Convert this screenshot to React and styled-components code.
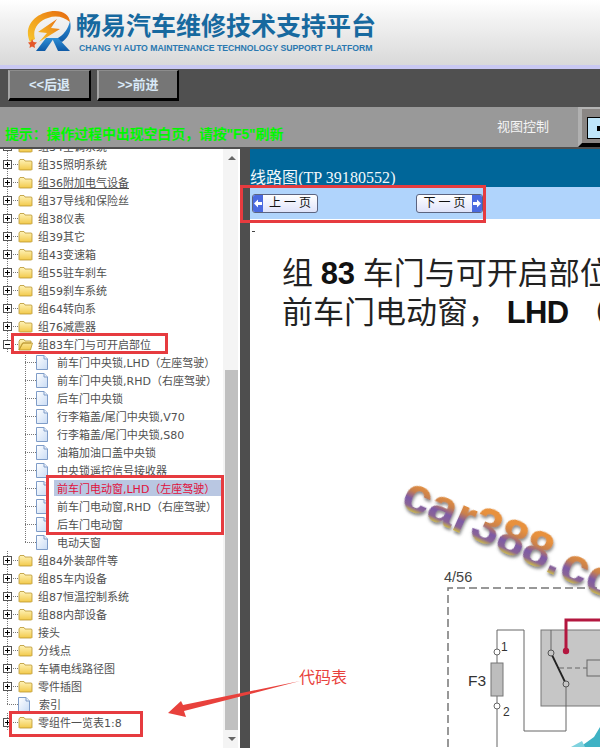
import React from "react";
import styled, { createGlobalStyle, css } from "styled-components";

const GlobalStyle = createGlobalStyle`
  html, body { margin: 0; padding: 0; background: #fff; }
  * { box-sizing: border-box; }
`;

const TREE_FONT = `"DejaVu Sans", "Noto Sans CJK SC", sans-serif`;
const CJK_FONT = `"Liberation Sans", "Noto Sans CJK SC", sans-serif`;

const Page = styled.div`
  position: relative;
  width: 600px;
  height: 748px;
  overflow: hidden;
  display: flex;
  flex-direction: column;
  font-family: ${CJK_FONT};
`;

const Header = styled.header`
  height: 69px;
  flex: none;
  display: flex;
  align-items: flex-start;
  gap: 5px;
  padding: 10px 0 0 25px;
  background: linear-gradient(to bottom, #ffffff 0, #f2f2f2 20px, #d9d9d9 65px);
  border-bottom: 4px solid #c9c8f2;
`;

const Brand = styled.div`
  display: flex;
  flex-direction: column;
`;

const BrandTitle = styled.div`
  font-size: 25px;
  line-height: 30px;
  height: 30px;
  margin-top: 1px;
  font-weight: 700;
  color: #17699f;
  white-space: nowrap;
`;

const BrandSub = styled.div`
  font-size: 8.7px;
  line-height: 12px;
  margin: 1px 0 0 3px;
  font-weight: 700;
  color: #2a78b0;
  white-space: nowrap;
`;

const Toolbar = styled.div`
  height: 38px;
  flex: none;
  display: flex;
  align-items: flex-start;
  gap: 6px;
  padding: 1px 0 0 8px;
  background: #505050;
`;

const ToolButton = styled.div`
  width: ${(p) => p.$w}px;
  height: 31px;
  display: flex;
  align-items: center;
  justify-content: center;
  padding-bottom: 3px;
  background: #767676;
  border-left: 2px solid #a4a4a4;
  border-top: 1px solid #8c8c8c;
  border-right: 2px solid #000;
  border-bottom: 3px solid #000;
  color: #d9e9f7;
  font-size: 13px;
  font-weight: 700;
`;

const NoticeBar = styled.div`
  height: 40px;
  flex: none;
  display: flex;
  background: #999999;
`;

const Notice = styled.div`
  flex: 1;
  padding: 17px 0 0 5px;
  font-size: 14px;
  line-height: 20px;
  font-weight: 700;
  letter-spacing: -0.15px;
  color: #00f800;
  white-space: nowrap;
`;

const ViewLabel = styled.div`
  padding: 11px 29px 0 0;
  font-size: 13px;
  line-height: 17px;
  color: #f4f4f4;
`;

const ViewToggle = styled.div`
  width: 22px;
  padding: 8px 0 0 5px;
  background: #8a8684;
  border-left: 4px solid #b0b0b0;
  border-top: 2px solid #b4b4b4;
  border-bottom: 4px solid #000;
`;

const ViewBox = styled.div`
  height: 22px;
  display: flex;
  align-items: center;
  justify-content: flex-end;
  background: #bfe6fb;
  border: 1px solid #000;
  border-right: 0;
  &::after {
    content: "";
    width: 3px;
    height: 5px;
    background: #000;
  }
`;

const Main = styled.div`
  flex: 1;
  min-height: 0;
  display: flex;
  border-top: 2px solid #4e4e4e;
`;

const Sidebar = styled.aside`
  width: 240px;
  flex: none;
  display: flex;
  background: #fff;
  overflow: hidden;
`;

const Tree = styled.div`
  flex: 1;
  min-width: 0;
  margin-top: -12px;
  font-family: ${TREE_FONT};
  font-size: 11px;
  color: #505050;
`;

const dots = (x, size = "100%") => css`
  repeating-linear-gradient(to bottom, #777 0 1px, transparent 1px 2px) ${x}px 0 / 1px ${size} no-repeat
`;
const hdots = (x, w) => css`
  repeating-linear-gradient(to right, #777 0 1px, transparent 1px 2px) ${x}px 9px / ${w}px 1px no-repeat
`;

const Row = styled.div`
  height: 18px;
  display: flex;
  align-items: center;
  white-space: nowrap;
  padding-left: ${(p) => (p.$kind === "child" || p.$kind === "lastChild" ? 36 : p.$kind === "index" ? 18 : 3)}px;
  ${(p) =>
    p.$kind === "child" &&
    css`
      background: ${dots(25)}, ${hdots(25, 11)};
    `}
  ${(p) =>
    p.$kind === "lastChild" &&
    css`
      background: ${dots(25, "10px")}, ${hdots(25, 11)};
    `}
  ${(p) =>
    (p.$kind === "group" || p.$kind === "index") &&
    css`
      background: ${dots(7, p.$kind === "index" ? "10px" : "100%")}, ${hdots(7, 11)};
    `}
`;

const Expander = styled.span`
  width: 9px;
  height: 9px;
  flex: none;
  margin-right: 6px;
  border: 1px solid #555;
  background:
    linear-gradient(#000, #000) center / 5px 1px no-repeat,
    ${(p) => (p.$open ? "none" : "linear-gradient(#000, #000) center / 1px 5px no-repeat")},
    #fff;
`;

const Label = styled.span`
  margin-left: ${(p) => p.$gap ?? 6}px;
  padding: 0 ${(p) => (p.$selected ? 7 : 3)}px 0 ${(p) => (p.$selected ? 3 : 0)}px;
  height: 16px;
  line-height: 19px;
  color: ${(p) => (p.$selected ? "#e0103c" : "inherit")};
  background: ${(p) => (p.$selected ? "#b9c7e2" : "transparent")};
  text-decoration: ${(p) => (p.$under ? "underline" : "none")};
`;

const Scrollbar = styled.div`
  width: 17px;
  flex: none;
  display: flex;
  flex-direction: column;
  background: #f4f4f4;
  border-right: 2px solid #fff;
  padding-left: 2px;
`;

const ScrollArrow = styled.div`
  height: 18px;
  flex: none;
  display: flex;
  align-items: center;
  justify-content: center;
  &::after {
    content: "";
    border-left: 4px solid transparent;
    border-right: 4px solid transparent;
    ${(p) => (p.$down ? "border-top" : "border-bottom")}: 4px solid #666;
  }
`;

const ScrollTrack = styled.div`
  flex: 1;
  padding-top: 203px;
  display: flex;
`;

const ScrollThumb = styled.div`
  flex: 1;
  background: #c0c0c0;
`;

const Splitter = styled.div`
  width: 10px;
  flex: none;
  background: #4e4e4e;
`;

const Content = styled.main`
  flex: 1;
  min-width: 0;
  display: flex;
  flex-direction: column;
  background: #fff;
  overflow: hidden;
`;

const TitleBar = styled.div`
  height: 38px;
  flex: none;
  padding-top: 20px;
  background: #006699;
  color: #f2f8fb;
  font-family: "Liberation Serif", "Noto Sans CJK SC", serif;
  font-size: 16px;
  line-height: 18px;
  letter-spacing: 0.05px;
  white-space: nowrap;
`;

const NavBar = styled.div`
  height: 32px;
  flex: none;
  display: flex;
  align-items: flex-start;
  gap: 98px;
  padding: 7px 0 0 2px;
  background: #b0d4fc;
`;

const PageButton = styled.div`
  width: ${(p) => p.$w}px;
  height: 19px;
  display: flex;
  flex-direction: ${(p) => (p.$next ? "row-reverse" : "row")};
  align-items: stretch;
  overflow: hidden;
  border: 1px solid #5c6480;
  border-radius: 3px;
  background: linear-gradient(to bottom, #ffffff, #dfe3fa);
  color: #111;
  font-size: 12px;
  line-height: 16px;
  letter-spacing: 3px;
`;

const PageCap = styled.div`
  width: 10px;
  flex: none;
  display: flex;
  align-items: center;
  justify-content: center;
  background: #4a6ae0;
`;

const PageText = styled.div`
  flex: 1;
  text-align: center;
  padding-left: 3px;
`;

const DocBody = styled.div`
  flex: 1;
  min-height: 0;
  display: flex;
  flex-direction: column;
  padding-top: 6px;
`;

const Tick = styled.div`
  width: 3px;
  height: 1px;
  margin: 6px 0 0 2px;
  flex: none;
  background: #444;
`;

const DocHeading = styled.div`
  margin: 22px 0 0 32px;
  flex: none;
  font-size: 31px;
  line-height: 39px;
  word-spacing: -1px;
  color: #222;
  white-space: nowrap;
  b {
    font-family: "Liberation Sans", sans-serif;
    font-weight: 700;
    color: #111;
  }
`;

const Lhd = styled.b`
  letter-spacing: -0.6px;
`;

const DiagramWrap = styled.div`
  margin: 137px 0 0 -1px;
  flex: none;
  width: 351px;
  height: 278px;
  svg {
    display: block;
  }
`;

const RedBox = styled.div`
  position: absolute;
  left: ${(p) => p.$x}px;
  top: ${(p) => p.$y}px;
  width: ${(p) => p.$w}px;
  height: ${(p) => p.$h}px;
  border: 3px solid #e63b3f;
  pointer-events: none;
`;

const ArrowSvg = styled.svg`
  position: absolute;
  left: 160px;
  top: 670px;
`;

const ArrowLabel = styled.div`
  position: absolute;
  left: 299px;
  top: 669px;
  font-size: 16px;
  line-height: 18px;
  color: #e8413c;
`;

const Logo = () => (
  <svg width="46" height="44" viewBox="0 0 46 44">
    <defs>
      <linearGradient id="ring" x1="0" y1="1" x2="1" y2="0">
        <stop offset="0" stopColor="#f7c52c" />
        <stop offset="0.55" stopColor="#f09a1c" />
        <stop offset="1" stopColor="#e5660f" />
      </linearGradient>
      <linearGradient id="blueR" x1="0" y1="0" x2="0" y2="1">
        <stop offset="0" stopColor="#2f8fd6" />
        <stop offset="1" stopColor="#0f5aa6" />
      </linearGradient>
    </defs>
    <path d="M5 32C-3 15 13 1 30 1C39 1 44 5 45 12C39 7 31 5 23 8C13 11 7 20 10 29Z" fill="url(#ring)" />
    <path d="M45 11C47 20 44 27 37 32L31 29C39 25 43 19 45 11Z" fill="url(#blueR)" />
    <path d="M32 9L13 22L22 23L14 32L35 19L26 18Z" fill="url(#ring)" />
    <path d="M11 41L21 28L29 28L20 41Z" fill="url(#blueR)" />
    <path d="M27 28L33 28L45 41L33 41Z" fill="url(#blueR)" />
    <path d="M7 29L8.500 32L12 32.500L9.500 35L10 38L7 36.500L4.500 38L5 35L3 32.500L6 32Z" fill="#e4572a" />
  </svg>
);

const Folder = ({ open }) => (
  <svg width="15" height="13" viewBox="0 0 15 13">
    <defs>
      <linearGradient id="folderFill" x1="0" y1="0" x2="0" y2="1">
        <stop offset="0" stopColor="#fff3b8" />
        <stop offset="1" stopColor="#f2c94a" />
      </linearGradient>
    </defs>
    {open ? (
      <path d="M1 3.500L2 1.500H6L7 3H13V5H5L1 12ZM1 12L4.500 5H14.500L12.500 12Z" fill="url(#folderFill)" stroke="#b9952f" strokeWidth="0.8" />
    ) : (
      <path d="M1 3L2 1.500H6L7 3H13.500L14 4V11.500L13.500 12H1.500L1 11.500Z" fill="url(#folderFill)" stroke="#b9952f" strokeWidth="0.8" />
    )}
  </svg>
);

const Doc = () => (
  <svg width="12" height="15" viewBox="0 0 12 15">
    <defs>
      <linearGradient id="docFill" x1="0" y1="0" x2="1" y2="1">
        <stop offset="0" stopColor="#ffffff" />
        <stop offset="1" stopColor="#c9dcf5" />
      </linearGradient>
    </defs>
    <path d="M0.500 0.500H8L11.500 4V14.500H0.500Z" fill="url(#docFill)" stroke="#7e9cc8" />
    <path d="M8 0.500V4H11.500" fill="#e8f0fb" stroke="#7e9cc8" />
  </svg>
);

const Arrowhead = ({ right }) => (
  <svg width="8" height="9" viewBox="0 0 8 9">
    <path d={right ? "M0 3H4V0.500L8 4.500L4 8.500V6H0Z" : "M8 3H4V0.500L0 4.500L4 8.500V6H8Z"} fill="#fff" />
  </svg>
);

const Diagram = () => (
  <svg width="351" height="278" viewBox="0 0 351 278">
    <defs>
      <linearGradient id="mark" gradientUnits="userSpaceOnUse" x1="0" y1="2" x2="0" y2="42">
        <stop offset="0.15" stopColor="#e8913c" />
        <stop offset="0.38" stopColor="#c9804c" />
        <stop offset="0.58" stopColor="#7d5aa6" />
        <stop offset="0.76" stopColor="#8a6496" />
        <stop offset="0.9" stopColor="#dccd33" />
        <stop offset="1" stopColor="#c4ba40" />
      </linearGradient>
      <filter id="markShadow" x="-10%" y="-20%" width="120%" height="150%">
        <feDropShadow dx="1.500" dy="2" stdDeviation="1.500" floodColor="#555" floodOpacity="0.7" />
      </filter>
    </defs>
    <path d="M199 278V119H351" fill="none" stroke="#777" strokeWidth="1.500" strokeDasharray="8 4" />
    <text x="195" y="113" fontFamily="Liberation Sans, sans-serif" fontSize="14.500" fill="#444">4/56</text>
    <rect x="292" y="161" width="70" height="76" fill="#c6c6c6" stroke="#777" />
    <path d="M248 278V161H275V262H317V215" fill="none" stroke="#666" strokeWidth="1" />
    <rect x="242" y="194" width="12" height="33" fill="#bdbdbd" stroke="#777" />
    <circle cx="248" cy="183" r="3" fill="#fff" stroke="#666" />
    <circle cx="248" cy="237" r="3" fill="#fff" stroke="#666" />
    <text x="219" y="217" fontFamily="Liberation Sans, sans-serif" fontSize="15.500" fill="#333">F3</text>
    <text x="252" y="182" fontFamily="Liberation Sans, sans-serif" fontSize="12" fill="#333">1</text>
    <text x="254" y="247" fontFamily="Liberation Sans, sans-serif" fontSize="12" fill="#333">2</text>
    <path d="M302 161V184" fill="none" stroke="#666" />
    <path d="M302 184L317 215" fill="none" stroke="#222" strokeWidth="1.800" />
    <circle cx="302" cy="184" r="3" fill="#c6c6c6" stroke="#555" />
    <circle cx="317" cy="215" r="3" fill="#c6c6c6" stroke="#555" />
    <path d="M310 199H338" fill="none" stroke="#666" strokeDasharray="5 3" />
    <rect x="338" y="191" width="24" height="16" fill="#c6c6c6" stroke="#666" />
    <path d="M317 182V151H351" fill="none" stroke="#b3173f" strokeWidth="3" />
    <circle cx="317" cy="182" r="3.200" fill="#b3173f" />
    <path d="M331 278L345 268L351 258V278Z" fill="#3fb2c4" />
    <path d="M322 278L333 272L336 278Z" fill="#7fd2de" />
    <text
      x="150"
      y="37"
      transform="rotate(24 150 37)"
      fontFamily="Liberation Sans, sans-serif"
      fontWeight="700"
      fontSize="50"
      fill="url(#mark)"
      filter="url(#markShadow)"
    >
      car388.com
    </text>
  </svg>
);

const rows = [
  { kind: "group", text: "组34空调系统" },
  { kind: "group", text: "组35照明系统" },
  { kind: "group", text: "组36附加电气设备", under: true },
  { kind: "group", text: "组37导线和保险丝" },
  { kind: "group", text: "组38仪表" },
  { kind: "group", text: "组39其它" },
  { kind: "group", text: "组43变速箱" },
  { kind: "group", text: "组55驻车刹车" },
  { kind: "group", text: "组59刹车系统" },
  { kind: "group", text: "组64转向系" },
  { kind: "group", text: "组76减震器" },
  { kind: "group", text: "组83车门与可开启部位", open: true },
  { kind: "child", text: "前车门中央锁,LHD（左座驾驶）" },
  { kind: "child", text: "前车门中央锁,RHD（右座驾驶）" },
  { kind: "child", text: "后车门中央锁" },
  { kind: "child", text: "行李箱盖/尾门中央锁,V70" },
  { kind: "child", text: "行李箱盖/尾门中央锁,S80" },
  { kind: "child", text: "油箱加油口盖中央锁" },
  { kind: "child", text: "中央锁遥控信号接收器" },
  { kind: "child", text: "前车门电动窗,LHD（左座驾驶）", selected: true },
  { kind: "child", text: "前车门电动窗,RHD（右座驾驶）" },
  { kind: "child", text: "后车门电动窗" },
  { kind: "lastChild", text: "电动天窗" },
  { kind: "group", text: "组84外装部件等" },
  { kind: "group", text: "组85车内设备" },
  { kind: "group", text: "组87恒温控制系统" },
  { kind: "group", text: "组88内部设备" },
  { kind: "group", text: "接头" },
  { kind: "group", text: "分线点" },
  { kind: "group", text: "车辆电线路径图" },
  { kind: "group", text: "零件插图" },
  { kind: "index", text: "索引" },
  { kind: "group", text: "零组件一览表1:8" },
];

const TreeRow = ({ kind, text, open, under, selected }) => (
  <Row $kind={kind}>
    {kind === "group" && <Expander $open={open} />}
    {kind === "group" ? <Folder open={open} /> : <Doc />}
    <Label $gap={kind === "group" ? 5 : selected ? 6 : 9} $under={under} $selected={selected}>
      {text}
    </Label>
  </Row>
);

export default function App() {
  return (
    <Page>
      <GlobalStyle />
      <Header>
        <Logo />
        <Brand>
          <BrandTitle>畅易汽车维修技术支持平台</BrandTitle>
          <BrandSub>CHANG YI AUTO MAINTENANCE TECHNOLOGY SUPPORT PLATFORM</BrandSub>
        </Brand>
      </Header>
      <Toolbar>
        <ToolButton $w={83}>&lt;&lt;后退</ToolButton>
        <ToolButton $w={82}>&gt;&gt;前进</ToolButton>
      </Toolbar>
      <NoticeBar>
        <Notice>提示：操作过程中出现空白页，请按"F5"刷新</Notice>
        <ViewLabel>视图控制</ViewLabel>
        <ViewToggle>
          <ViewBox />
        </ViewToggle>
      </NoticeBar>
      <Main>
        <Sidebar>
          <Tree>
            {rows.map((row) => (
              <TreeRow key={row.text} {...row} />
            ))}
          </Tree>
          <Scrollbar>
            <ScrollArrow />
            <ScrollTrack>
              <ScrollThumb />
            </ScrollTrack>
            <ScrollArrow $down />
          </Scrollbar>
        </Sidebar>
        <Splitter />
        <Content>
          <TitleBar>线路图(TP 39180552)</TitleBar>
          <NavBar>
            <PageButton $w={66}>
              <PageCap>
                <Arrowhead />
              </PageCap>
              <PageText>上一页</PageText>
            </PageButton>
            <PageButton $w={67} $next>
              <PageCap>
                <Arrowhead right />
              </PageCap>
              <PageText>下一页</PageText>
            </PageButton>
          </NavBar>
          <DocBody>
            <Tick />
            <DocHeading>
              组 <b>83</b> 车门与可开启部位
              <br />
              前车门电动窗， <Lhd>LHD</Lhd> （左座驾驶）
            </DocHeading>
            <DiagramWrap>
              <Diagram />
            </DiagramWrap>
          </DocBody>
        </Content>
      </Main>
      <RedBox $x={11} $y={333} $w={157} $h={21} />
      <RedBox $x={46} $y={475} $w={178} $h={60} />
      <RedBox $x={9} $y={711} $w={134} $h={26} />
      <RedBox $x={240} $y={185} $w={246} $h={38} />
      <ArrowSvg width="150" height="55" viewBox="0 0 150 55">
        <path d="M8 43L21 31L23 35L140 11L24 41L26 47Z" fill="#e8413c" />
      </ArrowSvg>
      <ArrowLabel>代码表</ArrowLabel>
    </Page>
  );
}
